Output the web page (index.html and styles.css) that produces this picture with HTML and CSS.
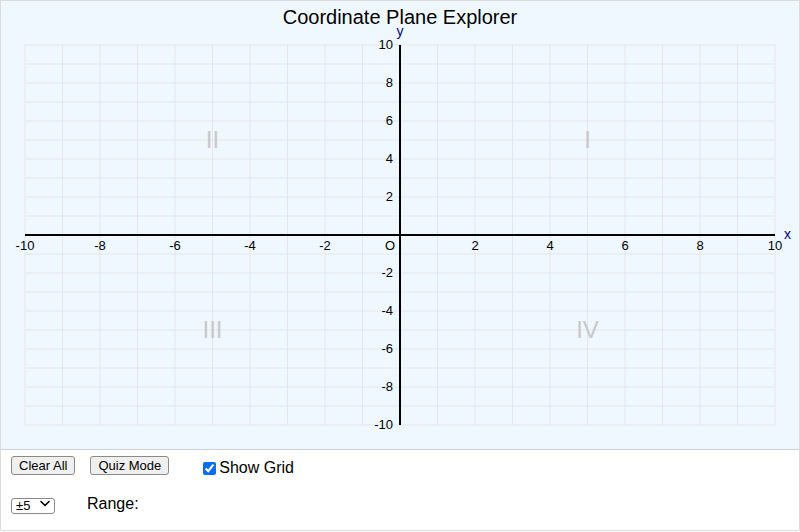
FILE: index.html
```html
<!DOCTYPE html>
<html lang="en">
<head>
<meta charset="utf-8">
<title>Coordinate Plane Explorer</title>
<link rel="stylesheet" href="styles.css">
</head>
<body>
<div class="app">
  <svg class="plane" width="798" height="448" viewBox="1 1 798 448" xmlns="http://www.w3.org/2000/svg">
    <text class="title" x="400" y="24">Coordinate Plane Explorer</text>
    <path class="grid" d="M25 45V425M62.5 45V425M100 45V425M137.5 45V425M175 45V425M212.5 45V425M250 45V425M287.5 45V425M325 45V425M362.5 45V425M400 45V425M437.5 45V425M475 45V425M512.5 45V425M550 45V425M587.5 45V425M625 45V425M662.5 45V425M700 45V425M737.5 45V425M775 45V425M25 45H775M25 64H775M25 83H775M25 102H775M25 121H775M25 140H775M25 159H775M25 178H775M25 197H775M25 216H775M25 235H775M25 254H775M25 273H775M25 292H775M25 311H775M25 330H775M25 349H775M25 368H775M25 387H775M25 406H775M25 425H775"/>
    <text class="quad" x="212.5" y="148">II</text>
    <text class="quad" x="587.5" y="148">I</text>
    <text class="quad" x="212.5" y="338">III</text>
    <text class="quad" x="587.5" y="338">IV</text>
    <path class="axis" d="M25 235H775M400 45V425"/>
    <text class="axis-name" x="784" y="239">x</text>
    <text class="axis-name mid" x="400" y="36">y</text>
    <g class="xticks">
      <text x="25" y="250">-10</text>
      <text x="100" y="250">-8</text>
      <text x="175" y="250">-6</text>
      <text x="250" y="250">-4</text>
      <text x="325" y="250">-2</text>
      <text x="475" y="250">2</text>
      <text x="550" y="250">4</text>
      <text x="625" y="250">6</text>
      <text x="700" y="250">8</text>
      <text x="775" y="250">10</text>
    </g>
    <g class="yticks">
      <text x="393" y="49">10</text>
      <text x="393" y="87">8</text>
      <text x="393" y="125">6</text>
      <text x="393" y="163">4</text>
      <text x="393" y="201">2</text>
      <text x="395" y="250">O</text>
      <text x="393" y="277">-2</text>
      <text x="393" y="315">-4</text>
      <text x="393" y="353">-6</text>
      <text x="393" y="391">-8</text>
      <text x="393" y="429">-10</text>
    </g>
  </svg>
  <div class="controls">
    <div class="row">
      <button class="btn" type="button">Clear All</button>
      <button class="btn" type="button">Quiz Mode</button>
      <label class="check"><input type="checkbox" checked><span>Show Grid</span></label>
    </div>
    <div class="row row2">
      <div class="select-wrap">
        <select class="range">
          <option selected>±5</option>
          <option>±10</option>
        </select>
        <svg class="chev" width="10" height="7" viewBox="0 0 10 7"><path d="M1 1.5L5 5.5L9 1.5" fill="none" stroke="#000" stroke-width="1.6" stroke-linecap="round" stroke-linejoin="round"/></svg>
      </div>
      <span class="range-label">Range:</span>
    </div>
  </div>
</div>
</body>
</html>
```
FILE: styles.css
```css
html, body {
  margin: 0;
  padding: 0;
  background: #fff;
}
body {
  font-family: "Liberation Sans", Arial, sans-serif;
  color: #000;
}
.app {
  width: 800px;
  height: 531px;
  box-sizing: border-box;
  border: 1px solid #dcdcdc;
}
.plane {
  display: block;
  background: #f0f8ff;
  border-bottom: 1px solid #cfcfcf;
  font-family: "Liberation Sans", Arial, sans-serif;
}
.title {
  font-size: 20px;
  text-anchor: middle;
  fill: #000;
}
.grid {
  fill: none;
  stroke: #e4e6ea;
  stroke-width: 1;
}
.quad {
  font-size: 24px;
  text-anchor: middle;
  fill: #c8c8c8;
}
.axis {
  fill: none;
  stroke: #000;
  stroke-width: 2;
}
.axis-name {
  font-size: 14px;
  fill: #00008b;
}
.axis-name.mid {
  text-anchor: middle;
}
.xticks text {
  font-size: 13px;
  text-anchor: middle;
  fill: #000;
}
.yticks text {
  font-size: 13px;
  text-anchor: end;
  fill: #000;
}
.controls {
  height: 80px;
  padding: 6px 10px 0;
  box-sizing: border-box;
}
.row {
  display: flex;
  align-items: center;
  height: 19px;
}
.row2 {
  margin-top: 21px;
  height: 15px;
}
.btn {
  font-family: "Liberation Sans", Arial, sans-serif;
  font-size: 13px;
  height: 19px;
  padding: 0 7px;
  margin: 0 15px 0 0;
  background: #efefef;
  border: 1px solid #8a8a8a;
  border-radius: 3px;
  color: #000;
  line-height: 17px;
}
.check {
  display: flex;
  align-items: center;
  margin: 4px 0 0 19px;
  font-size: 16px;
  height: 19px;
}
.check input {
  width: 13px;
  height: 13px;
  margin: 1px 3px 0 0;
  accent-color: #0a6cf5;
}
.select-wrap {
  position: relative;
  width: 44px;
  height: 16px;
}
.range {
  appearance: none;
  -webkit-appearance: none;
  width: 44px;
  height: 16px;
  box-sizing: border-box;
  margin: 0;
  padding: 0 0 0 4px;
  font-family: "Liberation Sans", Arial, sans-serif;
  font-size: 13px;
  line-height: 14px;
  background: #fff;
  border: 1px solid #8a8a8a;
  border-radius: 3px;
  color: #000;
}
.chev {
  position: absolute;
  right: 5px;
  top: 4px;
  pointer-events: none;
}
.range-label {
  margin-left: 32px;
  font-size: 16px;
  line-height: 15px;
}
```
